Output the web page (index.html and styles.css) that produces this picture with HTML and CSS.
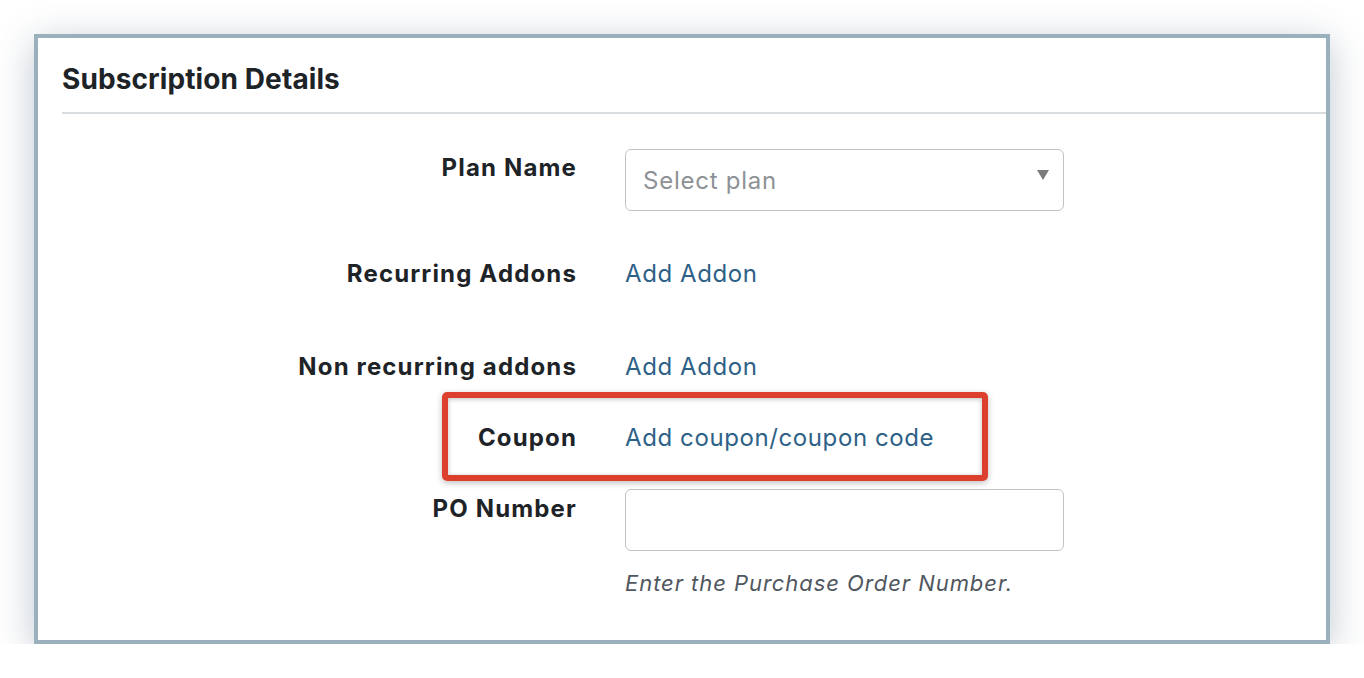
FILE: index.html
```html
<!DOCTYPE html>
<html lang="en">
<head>
<meta charset="utf-8">
<title>Subscription Details</title>
<link rel="stylesheet" href="styles.css">
</head>
<body>
<div class="card">
  <div class="card-header">
    <h2 class="card-title">Subscription Details</h2>
  </div>
  <div class="form">
    <div class="row row-plan">
      <div class="label label-field">Plan Name</div>
      <div class="value">
        <div class="select">
          <span class="placeholder">Select plan</span>
          <span class="arrow"></span>
        </div>
      </div>
    </div>
    <div class="row row-recurring">
      <div class="label">Recurring Addons</div>
      <div class="value"><a class="link" href="#">Add Addon</a></div>
    </div>
    <div class="row row-nonrecurring">
      <div class="label">Non recurring addons</div>
      <div class="value"><a class="link" href="#">Add Addon</a></div>
    </div>
    <div class="row row-coupon">
      <div class="highlight"></div>
      <div class="label">Coupon</div>
      <div class="value"><a class="link" href="#">Add coupon/coupon code</a></div>
    </div>
    <div class="row row-po">
      <div class="label label-field2">PO Number</div>
      <div class="value">
        <div class="input"></div>
        <p class="help">Enter the Purchase Order Number.</p>
      </div>
    </div>
  </div>
</div>
</body>
</html>
```

FILE: styles.css
```css
* { box-sizing: border-box; }
html, body { margin: 0; padding: 0; background: #ffffff; }
body {
  font-family: Inter, "Noto Sans", "Liberation Sans", sans-serif;
  color: #1d2327;
  padding: 34px 0 0 34px;
}
.card {
  width: 1296px;
  height: 610px;
  border: 4px solid #9ab0bd;
  background: #ffffff;
  box-shadow: 0 8px 36px rgba(60, 85, 110, 0.32);
  padding-left: 24px;
}
.card-header {
  padding-top: 24px;
  padding-bottom: 16px;
  border-bottom: 2px solid #d9dde0;
}
.card-title {
  margin: 0;
  font-size: 28px;
  line-height: 34px;
  font-weight: 700;
  letter-spacing: 0.1px;
}
.form { padding-top: 35px; }
.row {
  display: flex;
  gap: 48px;
  position: relative;
}
.label {
  width: 515px;
  text-align: right;
  font-size: 24px;
  line-height: 30px;
  font-weight: 700;
  letter-spacing: 1.15px;
  white-space: nowrap;
}
.label-field { padding-top: 4px; }
.label-field2 { padding-top: 5px; }
.value { width: 439px; }
.link {
  font-size: 24px;
  line-height: 30px;
  letter-spacing: 0.6px;
  color: #2e6187;
  text-decoration: none;
  white-space: nowrap;
}
.row-recurring { margin-top: 48px; }
.row-nonrecurring { margin-top: 63px; }
.row-coupon { margin-top: 41px; }
.row-po { margin-top: 36px; }
.select, .input {
  height: 62px;
  border: 1.5px solid #bfc3c8;
  border-radius: 6px;
  background: #fff;
}
.select {
  display: flex;
  align-items: center;
  justify-content: space-between;
  padding: 0 14px 0 17px;
}
.placeholder {
  font-size: 24px;
  letter-spacing: 0.75px;
  color: #8e9296;
  padding-top: 1px;
}
.arrow {
  width: 0;
  height: 0;
  border-left: 6.5px solid transparent;
  border-right: 6.5px solid transparent;
  border-top: 10px solid #7b7b7b;
  margin-top: -10px;
}
.help {
  margin: 17px 0 0;
  font-size: 22px;
  line-height: 30px;
  letter-spacing: 0.95px;
  font-style: italic;
  color: #50575e;
  white-space: nowrap;
}
.highlight {
  position: absolute;
  left: 380px;
  top: -31px;
  width: 546px;
  height: 89px;
  border: 6px solid #dc3f2e;
  border-radius: 5px;
  box-shadow: 0 2px 6px rgba(0, 0, 0, 0.25), inset 0 1px 5px rgba(0, 0, 0, 0.25);
  pointer-events: none;
}
```
